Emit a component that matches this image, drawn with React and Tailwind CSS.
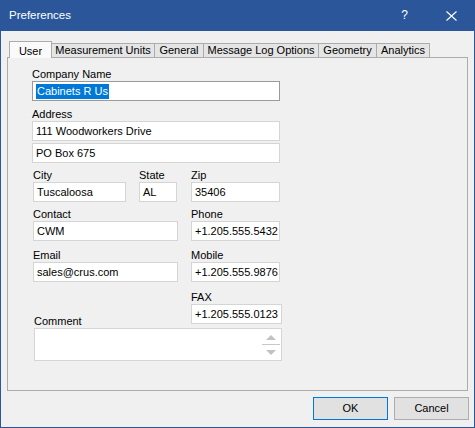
import React from "react";

const F = { fontFamily: '"Liberation Sans", Arial, sans-serif' };

function Label({ children, className = "" }) {
  return (
    <div className={"h-[13px] text-[11px] leading-[13px] text-black whitespace-nowrap " + className}>
      {children}
    </div>
  );
}

function Box({ w, children, focus = false, className = "" }) {
  return (
    <div
      className={
        "h-[20px] bg-white border pl-[3px] text-[11px] leading-[18px] text-black whitespace-nowrap overflow-hidden " +
        (focus ? "border-[#9a9a9a] " : "border-[#d5d5d5] ") +
        w +
        " " +
        className
      }
    >
      {children}
    </div>
  );
}

function Tab({ w, children, selected }) {
  if (selected) {
    return (
      <div
        className={
          "relative z-10 h-[17px] -mb-[1px] bg-[#fafafa] border-l border-r border-t border-[#acacac] text-[11px] leading-[15px] pt-[2px] text-center text-black " +
          w
        }
      >
        {children}
      </div>
    );
  }
  return (
    <div
      className={
        "h-[14px] bg-[#e5e5e5] border-r border-t border-[#acacac] text-[11px] leading-[13px] text-center text-black whitespace-nowrap " +
        w
      }
    >
      {children}
    </div>
  );
}

export default function App() {
  return (
    <div style={F} className="w-[475px] h-[428px] bg-[#2b579a] flex flex-col">
      {/* Title bar */}
      <div className="h-[31px] flex items-start text-white">
        <div className="pl-[9px] pt-[9px] text-[11.5px] leading-[13px]">Preferences</div>
        <div className="flex-1" />
        <div className="pt-[9px] mr-[38px] text-[12px] leading-[13px]">?</div>
        <div className="pt-[11px] mr-[18px]">
          <svg width="11" height="10" viewBox="0 0 11 10">
            <path d="M0.5 0.5 L10.5 9.5 M10.5 0.5 L0.5 9.5" stroke="white" strokeWidth="1.1" fill="none" />
          </svg>
        </div>
      </div>

      {/* Body */}
      <div className="flex-1 mx-[1px] mb-[1px] bg-[#f0f0f0] flex flex-col">
        <div className="mx-[6px]">
          {/* Tabs */}
          <div className="mt-[10px] h-[16px] flex items-end pl-[2px]">
            <Tab w="w-[43px]" selected>User</Tab>
            <Tab w="w-[103px]">Measurement Units</Tab>
            <Tab w="w-[49px]">General</Tab>
            <Tab w="w-[115px]">Message Log Options</Tab>
            <Tab w="w-[58px]">Geometry</Tab>
            <Tab w="w-[53px]">Analytics</Tab>
          </div>

          {/* Panel */}
          <div className="h-[334px] border border-[#acacac] pt-[10px] pl-[24px]">
            <Label>Company Name</Label>
            <Box w="w-[248px]" focus className="pl-[1px]">
              <span className="inline-block bg-[#0078d7] text-white leading-[15px] px-[1px] mt-[1px]">Cabinets R Us</span>
            </Box>

            <Label className="mt-[7px]">Address</Label>
            <Box w="w-[248px]">111 Woodworkers Drive</Box>
            <Box w="w-[248px]" className="mt-[2px]">PO Box 675</Box>

            <div className="flex mt-[6px] pl-[1px]">
              <div className="w-[106px]">
                <Label>City</Label>
                <Box w="w-[93px]">Tuscaloosa</Box>
              </div>
              <div className="w-[52px]">
                <Label>State</Label>
                <Box w="w-[38px]">AL</Box>
              </div>
              <div>
                <Label>Zip</Label>
                <Box w="w-[89px]">35406</Box>
              </div>
            </div>

            <div className="flex mt-[6px] pl-[1px]">
              <div className="w-[158px]">
                <Label>Contact</Label>
                <Box w="w-[145px]">CWM</Box>
              </div>
              <div>
                <Label>Phone</Label>
                <Box w="w-[89px]">+1.205.555.5432</Box>
              </div>
            </div>

            <div className="flex mt-[8px] pl-[1px]">
              <div className="w-[158px]">
                <Label>Email</Label>
                <Box w="w-[145px]">sales@crus.com</Box>
              </div>
              <div>
                <Label>Mobile</Label>
                <Box w="w-[89px]">+1.205.555.9876</Box>
              </div>
            </div>

            <div className="flex items-end mt-[9px] pl-[2px]">
              <div className="w-[157px]">
                <Label>Comment</Label>
              </div>
              <div className="mb-[4px]">
                <Label>FAX</Label>
                <Box w="w-[91px]">+1.205.555.0123</Box>
              </div>
            </div>
            <div className="ml-[2px] w-[248px] h-[33px] bg-white border border-[#d5d5d5] flex justify-end">
              <div className="w-[18px] mr-[1px] flex flex-col items-center pt-[6px]">
                <svg width="10" height="5" viewBox="0 0 10 5">
                  <path d="M0 5 L5 0 L10 5 Z" fill="#c2c2c2" />
                </svg>
                <div className="w-[18px] h-[1px] bg-[#c8c8c8] mt-[4px]" />
                <svg width="10" height="5" viewBox="0 0 10 5" className="mt-[5px]">
                  <path d="M0 0 L5 5 L10 0 Z" fill="#c2c2c2" />
                </svg>
              </div>
            </div>
          </div>
        </div>

        {/* Buttons */}
        <div className="flex justify-end gap-[6px] pr-[5px] mt-[6px]">
          <div className="w-[75px] h-[23px] bg-[#e1e1e1] border border-[#0078d7] text-[11px] leading-[21px] text-center text-black">OK</div>
          <div className="w-[75px] h-[23px] bg-[#e1e1e1] border border-[#adadad] text-[11px] leading-[21px] text-center text-black">Cancel</div>
        </div>
      </div>
    </div>
  );
}
